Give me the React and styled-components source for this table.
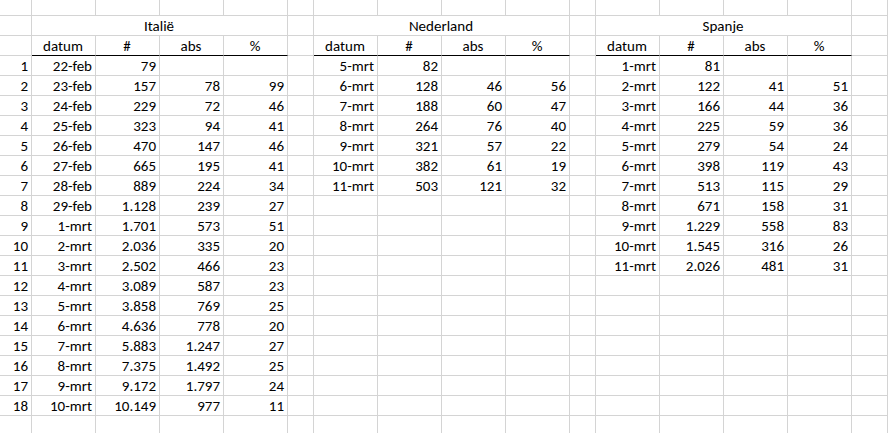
import React from "react";
import styled, { createGlobalStyle } from "styled-components";

const GlobalStyle = createGlobalStyle`
    html, body {
        margin: 0;
        padding: 0;
        background: #ffffff;
        overflow: hidden;
    }
`;

const COLUMNS = [32, 64, 64, 64, 64, 26, 64, 64, 64, 64, 26, 64, 64, 64, 64];
const EMPTY_ROWS_AFTER = 2;

const blocks = [
    {
        title: "Italië",
        rows: [
            ["22-feb", "79", "", ""],
            ["23-feb", "157", "78", "99"],
            ["24-feb", "229", "72", "46"],
            ["25-feb", "323", "94", "41"],
            ["26-feb", "470", "147", "46"],
            ["27-feb", "665", "195", "41"],
            ["28-feb", "889", "224", "34"],
            ["29-feb", "1.128", "239", "27"],
            ["1-mrt", "1.701", "573", "51"],
            ["2-mrt", "2.036", "335", "20"],
            ["3-mrt", "2.502", "466", "23"],
            ["4-mrt", "3.089", "587", "23"],
            ["5-mrt", "3.858", "769", "25"],
            ["6-mrt", "4.636", "778", "20"],
            ["7-mrt", "5.883", "1.247", "27"],
            ["8-mrt", "7.375", "1.492", "25"],
            ["9-mrt", "9.172", "1.797", "24"],
            ["10-mrt", "10.149", "977", "11"],
        ],
    },
    {
        title: "Nederland",
        rows: [
            ["5-mrt", "82", "", ""],
            ["6-mrt", "128", "46", "56"],
            ["7-mrt", "188", "60", "47"],
            ["8-mrt", "264", "76", "40"],
            ["9-mrt", "321", "57", "22"],
            ["10-mrt", "382", "61", "19"],
            ["11-mrt", "503", "121", "32"],
        ],
    },
    {
        title: "Spanje",
        rows: [
            ["1-mrt", "81", "", ""],
            ["2-mrt", "122", "41", "51"],
            ["3-mrt", "166", "44", "36"],
            ["4-mrt", "225", "59", "36"],
            ["5-mrt", "279", "54", "24"],
            ["6-mrt", "398", "119", "43"],
            ["7-mrt", "513", "115", "29"],
            ["8-mrt", "671", "158", "31"],
            ["9-mrt", "1.229", "558", "83"],
            ["10-mrt", "1.545", "316", "26"],
            ["11-mrt", "2.026", "481", "31"],
        ],
    },
];

const HEADERS = ["datum", "#", "abs", "%"];
const DATA_ROWS = 18;

export default function App() {
    const cells = [];
    let key = 0;

    // top partial row
    for (let c = 0; c <= COLUMNS.length; c++) {
        cells.push(<Cell key={key++} />);
    }

    // title row
    cells.push(<Cell key={key++} />);
    blocks.forEach((block, i) => {
        if (i > 0) cells.push(<Cell key={key++} />);
        cells.push(<TitleCell key={key++}>{block.title}</TitleCell>);
    });
    cells.push(<Cell key={key++} />);

    // header row
    cells.push(<Cell key={key++} />);
    blocks.forEach((block, i) => {
        if (i > 0) cells.push(<Cell key={key++} />);
        HEADERS.forEach((h) => {
            cells.push(<HeaderCell key={key++}>{h}</HeaderCell>);
        });
    });
    cells.push(<Cell key={key++} />);

    // data rows
    for (let r = 0; r < DATA_ROWS + EMPTY_ROWS_AFTER; r++) {
        cells.push(<Cell key={key++} $align="right">{r < DATA_ROWS ? r + 1 : ""}</Cell>);
        blocks.forEach((block, i) => {
            if (i > 0) cells.push(<Cell key={key++} />);
            const row = block.rows[r] || ["", "", "", ""];
            row.forEach((value) => {
                cells.push(<Cell key={key++} $align="right">{value}</Cell>);
            });
        });
        cells.push(<Cell key={key++} />);
    }

    return (
        <>
            <GlobalStyle />
            <Sheet>{cells}</Sheet>
        </>
    );
}

const Sheet = styled.div`
    display: grid;
    grid-template-columns: ${COLUMNS.map((w) => w + "px").join(" ")} 1fr;
    grid-template-rows: 16px;
    grid-auto-rows: 20px;
    width: 888px;
    height: 433px;
    overflow: hidden;
    font-family: "Carlito", "Lato", "Liberation Sans", sans-serif;
    font-size: 15px;
    color: #000000;
`;

const Cell = styled.div`
    box-sizing: border-box;
    border-right: 1px solid #d4d4d4;
    border-bottom: 1px solid #d4d4d4;
    display: flex;
    align-items: flex-end;
    justify-content: ${(p) => (p.$align === "right" ? "flex-end" : "center")};
    padding: 0 3px 0 2px;
    line-height: 18px;
    white-space: nowrap;
    overflow: hidden;
`;

const TitleCell = styled(Cell)`
    grid-column: span 4;
    justify-content: center;
`;

const HeaderCell = styled(Cell)`
    justify-content: center;
    border-bottom-color: #000000;
`;
